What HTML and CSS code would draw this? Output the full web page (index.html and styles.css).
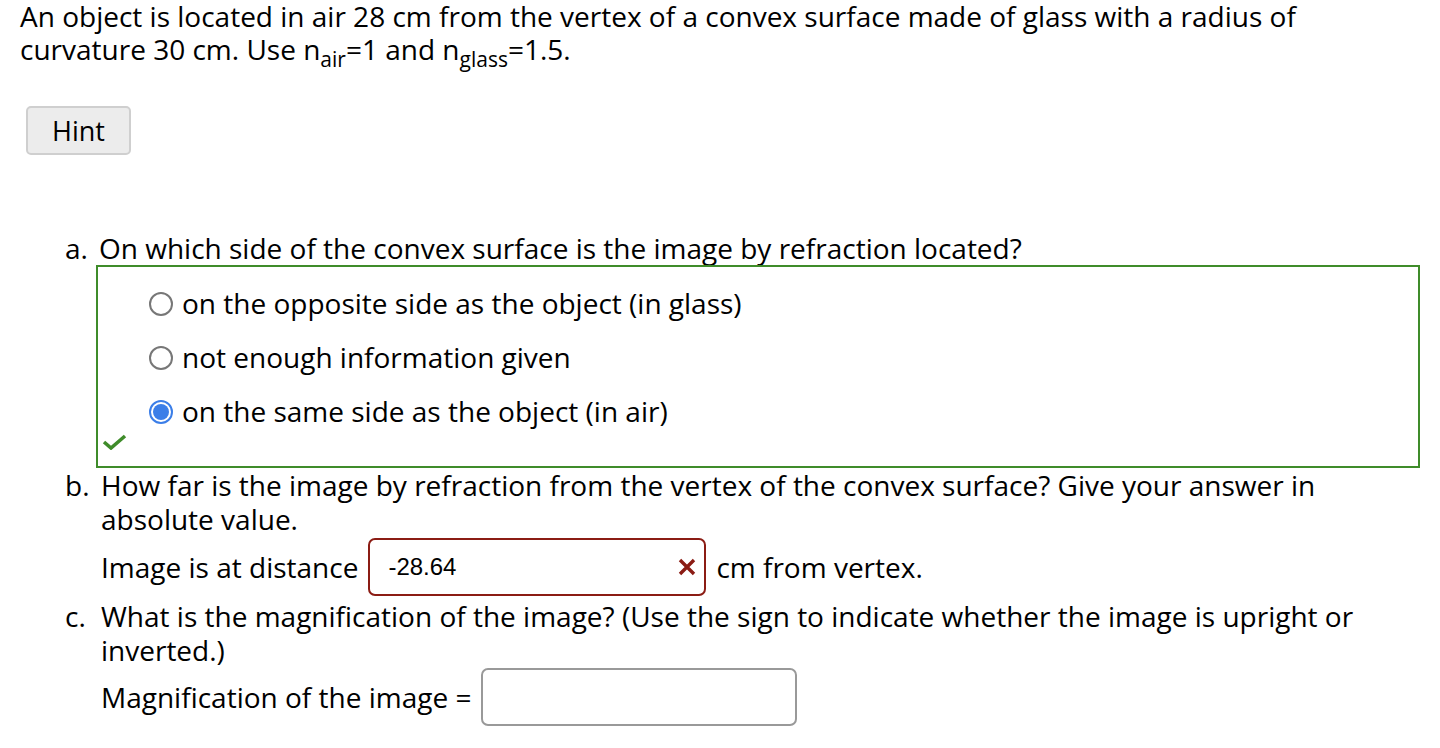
FILE: index.html
```html
<!DOCTYPE html>
<html>
<head>
<meta charset="utf-8">
<link rel="stylesheet" href="styles.css">
</head>
<body>
<div class="page">
  <p class="intro">An object is located in air 28 cm from the vertex of a convex surface made of glass with a radius of curvature 30 cm. Use n<sub>air</sub>=1 and n<sub>glass</sub>=1.5.</p>
  <div class="hint-wrap"><button class="hint">Hint</button></div>

  <ol class="parts">
    <li class="part part-a">
      <span class="marker">a.</span>
      <div class="body">
        <div class="q">On which side of the convex surface is the image by refraction located?</div>
        <div class="choices">
          <label class="choice"><span class="radio"></span><span>on the opposite side as the object (in glass)</span></label>
          <label class="choice"><span class="radio"></span><span>not enough information given</span></label>
          <label class="choice"><span class="radio checked"></span><span>on the same side as the object (in air)</span></label>
          <svg class="check" width="26" height="16" viewBox="0 0 26 16"><path d="M2 8 L9 14 L23 2" fill="none" stroke="#3f8c2a" stroke-width="3.6"/></svg>
        </div>
      </div>
    </li>
    <li class="part part-b">
      <span class="marker">b.</span>
      <div class="body">
        <div class="q">How far is the image by refraction from the vertex of the convex surface? Give your answer in absolute value.</div>
        <div class="answer-row">
          <span>Image is at distance</span>
          <span class="field wrong"><span class="val">-28.64</span><svg class="x" width="20" height="20" viewBox="0 0 20 20"><path d="M3 3 L17 17 M17 3 L3 17" stroke="#8b1c14" stroke-width="3.4" fill="none"/></svg></span>
          <span>cm from vertex.</span>
        </div>
      </div>
    </li>
    <li class="part part-c">
      <span class="marker">c.</span>
      <div class="body">
        <div class="q">What is the magnification of the image? (Use the sign to indicate whether the image is upright or inverted.)</div>
        <div class="answer-row">
          <span>Magnification of the image =</span>
          <span class="field empty"></span>
        </div>
      </div>
    </li>
  </ol>
</div>
</body>
</html>
```

FILE: styles.css
```css
html, body {
  margin: 0;
  padding: 0;
  background: #fff;
}
body {
  font-family: "Open Sans", "DejaVu Sans", sans-serif;
  font-size: 28px;
  color: #000;
}
.page {
  padding: 0 20px;
}
.intro {
  margin: 0;
  line-height: 33px;
  width: 1310px;
}
.intro sub {
  font-size: 21px;
  vertical-align: -7px;
  line-height: 0;
}
.hint-wrap {
  padding: 40px 0 0 6px;
}
.hint {
  font-family: inherit;
  font-size: 27px;
  width: 105px;
  height: 49px;
  background: #ececec;
  border: 2px solid #cfcfcf;
  border-radius: 5px;
  color: #000;
  padding: 0;
  display: block;
  line-height: 45px;
}
.parts {
  list-style: none;
  margin: 0;
  padding: 76px 0 0 0;
}
.part {
  display: flex;
  line-height: 34px;
}
.marker {
  width: 81px;
  box-sizing: border-box;
  padding-left: 45px;
  text-align: left;
}
.body {
  flex: 1;
}
.choices {
  border: 2px solid #3f8c2a;
  margin-left: -3px;
  width: 1324px;
  box-sizing: border-box;
  height: 203px;
  padding: 9px 0 0 51px;
  position: relative;
}
.choice {
  display: flex;
  align-items: center;
  height: 54px;
}
.radio {
  width: 24px;
  height: 24px;
  border: 2px solid #777;
  border-radius: 50%;
  box-sizing: border-box;
  margin-right: 9px;
  position: relative;
  top: 1px;
}
.radio.checked {
  border: 2px solid #3b7ee8;
  background: #fff;
}
.radio.checked::after {
  content: "";
  position: absolute;
  left: 2px;
  top: 2px;
  width: 16px;
  height: 16px;
  border-radius: 50%;
  background: #3b7ee8;
}
.check {
  position: absolute;
  left: 4px;
  top: 167px;
}
.part-b .q, .part-c .q {
  width: 1280px;
}
.answer-row {
  display: flex;
  align-items: center;
  margin-top: 2px;
  gap: 10px;
}
.field {
  display: flex;
  align-items: center;
  box-sizing: border-box;
  height: 58px;
  border-radius: 7px;
}
.field.wrong {
  width: 338px;
  border: 2px solid #8b1c14;
  padding: 0 7px 0 18px;
  justify-content: space-between;
}
.val {
  font-family: "Liberation Sans", Arial, sans-serif;
  font-size: 24px;
}
.field.empty {
  width: 316px;
  border: 2px solid #999;
}
.part-c {
  margin-top: 3px;
}
.part-c .answer-row {
  margin-top: 1px;
}
```
